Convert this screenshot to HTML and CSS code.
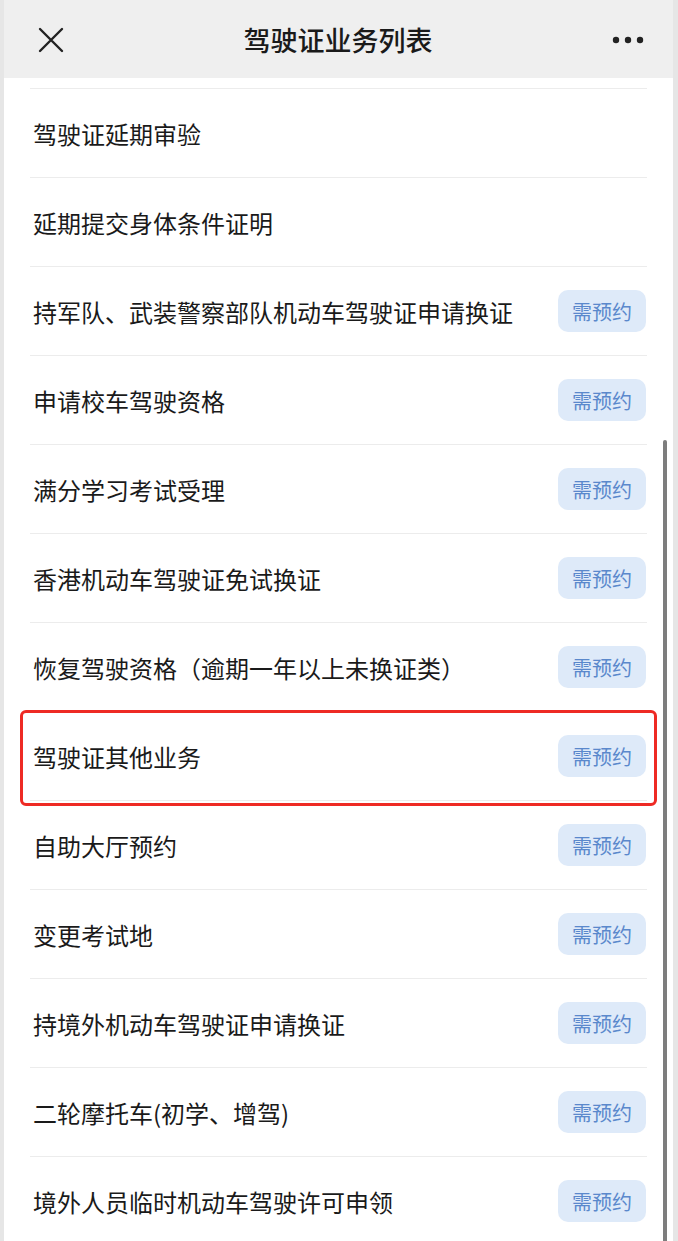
FILE: index.html
```html
<!DOCTYPE html>
<html lang="zh-CN">

<head>
    <meta charset="UTF-8">
    <title>驾驶证业务列表</title>
    <link rel="stylesheet" href="styles.css">
</head>

<body>

    <div class="screen">
        <div class="top-bar">
            <svg class="close-icon" width="26" height="26" viewBox="0 0 26 26">
                <path d="M2 2 L24 24 M24 2 L2 24" stroke="#222" stroke-width="2.4" stroke-linecap="round" fill="none" />
            </svg>
            <div class="title">驾驶证业务列表</div>
            <svg class="more-icon" width="32" height="8" viewBox="0 0 32 8">
                <circle cx="4" cy="4" r="3.2" fill="#222" />
                <circle cx="16" cy="4" r="3.2" fill="#222" />
                <circle cx="28" cy="4" r="3.2" fill="#222" />
            </svg>
        </div>

        <div class="list">
            <div class="list-top"></div>
            <div class="item"><span class="name">驾驶证延期审验</span></div>
            <div class="item"><span class="name">延期提交身体条件证明</span></div>
            <div class="item"><span class="name">持军队、武装警察部队机动车驾驶证申请换证</span><span class="tag">需预约</span></div>
            <div class="item"><span class="name">申请校车驾驶资格</span><span class="tag">需预约</span></div>
            <div class="item"><span class="name">满分学习考试受理</span><span class="tag">需预约</span></div>
            <div class="item"><span class="name">香港机动车驾驶证免试换证</span><span class="tag">需预约</span></div>
            <div class="item"><span class="name">恢复驾驶资格（逾期一年以上未换证类）</span><span class="tag">需预约</span></div>
            <div class="item marked"><span class="name">驾驶证其他业务</span><span class="tag">需预约</span></div>
            <div class="item"><span class="name">自助大厅预约</span><span class="tag">需预约</span></div>
            <div class="item"><span class="name">变更考试地</span><span class="tag">需预约</span></div>
            <div class="item"><span class="name">持境外机动车驾驶证申请换证</span><span class="tag">需预约</span></div>
            <div class="item"><span class="name">二轮摩托车(初学、增驾)</span><span class="tag">需预约</span></div>
            <div class="item"><span class="name">境外人员临时机动车驾驶许可申领</span><span class="tag">需预约</span></div>
        </div>

        <div class="scrollbar"></div>
    </div>

</body>

</html>
```

FILE: styles.css
```css
body {
    font-family: "Noto Sans CJK SC", "Noto Sans", sans-serif;
    background: #e6e6e6;
    margin: 0;
    height: 1241px;
    overflow: hidden;
}

.screen {
    position: relative;
    background: #fff;
    margin: 0 5px 0 4px;
    height: 1241px;
    overflow: hidden;
}

.top-bar {
    height: 78px;
    background: #efefef;
    display: flex;
    align-items: center;
    justify-content: space-between;
    padding: 0 29px 0 34px;
    box-sizing: border-box;
}

.close-icon {
    margin-top: 1px;
}

.title {
    font-size: 27px;
    font-weight: 500;
    color: #1a1a1a;
    margin-left: 0;
}

.more-icon {
    margin-top: 1px;
}

.list {
    padding: 0 26px;
}

.list-top {
    height: 10px;
    border-bottom: 1px solid #ececec;
}

.item {
    position: relative;
    height: 88px;
    border-bottom: 1px solid #ececec;
    display: flex;
    align-items: center;
    justify-content: space-between;
    padding: 0 1px 0 3px;
}

.name {
    font-size: 24px;
    color: #1a1a1a;
}

.tag {
    width: 88px;
    height: 42px;
    border-radius: 10px;
    background: #deeaf9;
    color: #5a88cc;
    font-size: 20px;
    display: flex;
    align-items: center;
    justify-content: center;
}

.marked::after {
    content: "";
    position: absolute;
    left: -10px;
    right: -10px;
    top: -2px;
    bottom: -6px;
    border: 3px solid #ee2a24;
    border-radius: 6px;
}

.scrollbar {
    position: absolute;
    right: 6px;
    top: 440px;
    width: 4px;
    height: 810px;
    border-radius: 2px;
    background: #7d7d7d;
}
```
